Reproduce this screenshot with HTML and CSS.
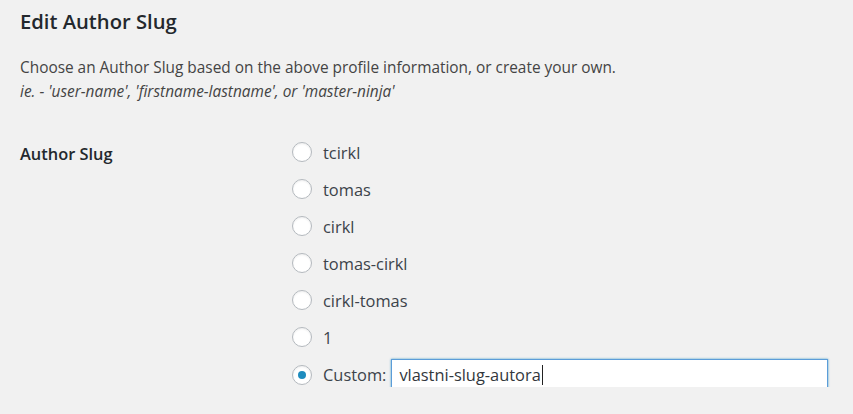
FILE: index.html
```html
<!DOCTYPE html>
<html>
<head>
<meta charset="utf-8">
<link rel="stylesheet" href="styles.css">
</head>
<body>
<div class="wrap">
  <h2 class="title">Edit Author Slug</h2>
  <p class="desc">Choose an Author Slug based on the above profile information, or create your own.<br><em>ie. - 'user-name', 'firstname-lastname', or 'master-ninja'</em></p>
  <div class="row">
    <div class="label">Author Slug</div>
    <div class="options">
      <label class="opt"><span class="radio"></span><span>tcirkl</span></label>
      <label class="opt"><span class="radio"></span><span>tomas</span></label>
      <label class="opt"><span class="radio"></span><span>cirkl</span></label>
      <label class="opt"><span class="radio"></span><span>tomas-cirkl</span></label>
      <label class="opt"><span class="radio"></span><span>cirkl-tomas</span></label>
      <label class="opt"><span class="radio"></span><span>1</span></label>
      <label class="opt"><span class="radio checked"></span><span>Custom:</span><span class="input">vlastni-slug-autora<span class="caret"></span></span></label>
    </div>
  </div>
</div>
</body>
</html>
```
FILE: styles.css
```css
html, body {
  margin: 0;
  padding: 0;
  background: #f1f1f1;
}
body {
  font-family: "Open Sans", "Noto Sans", sans-serif;
  color: #444;
  font-size: 15px;
}
.wrap {
  padding: 7px 0 0 20px;
}
.title {
  margin: 0;
  font-size: 20.2px;
  font-weight: 600;
  color: #23282d;
  line-height: 28px;
}
.desc {
  margin: 21px 0 0 0;
  font-size: 15.4px;
  line-height: 24px;
  color: #444;
}
.desc em {
  font-style: italic;
}
.row {
  display: flex;
  margin-top: 36px;
}
.label {
  width: 272px;
  font-weight: 600;
  color: #23282d;
  font-size: 16.4px;
  line-height: 24px;
  padding-top: 2px;
}
.options {
  display: flex;
  flex-direction: column;
  gap: 13.1px;
}
.opt {
  display: flex;
  align-items: center;
  height: 24px;
  font-size: 16.4px;
  color: #3c434a;
}
.radio {
  box-sizing: border-box;
  width: 20px;
  height: 20px;
  border-radius: 50%;
  border: 1px solid #b4b9be;
  background: #fff;
  box-shadow: inset 0 1px 2px rgba(0,0,0,0.07);
  margin-right: 11px;
  position: relative;
  flex: none;
}
.radio.checked::after {
  content: "";
  position: absolute;
  left: 5px;
  top: 5px;
  width: 8px;
  height: 8px;
  border-radius: 50%;
  background: #1e8cbe;
}
.input {
  box-sizing: border-box;
  margin-left: 5px;
  width: 437px;
  height: 32px;
  border: 1px solid #5b9dd9;
  box-shadow: 0 0 2px rgba(30,140,190,0.8);
  background: #fff;
  color: #32373c;
  padding: 0 7px;
  display: flex;
  align-items: center;
  font-size: 16.4px;
}
.caret {
  display: inline-block;
  width: 1px;
  height: 20px;
  background: #222;
  margin-left: 1px;
}
```
